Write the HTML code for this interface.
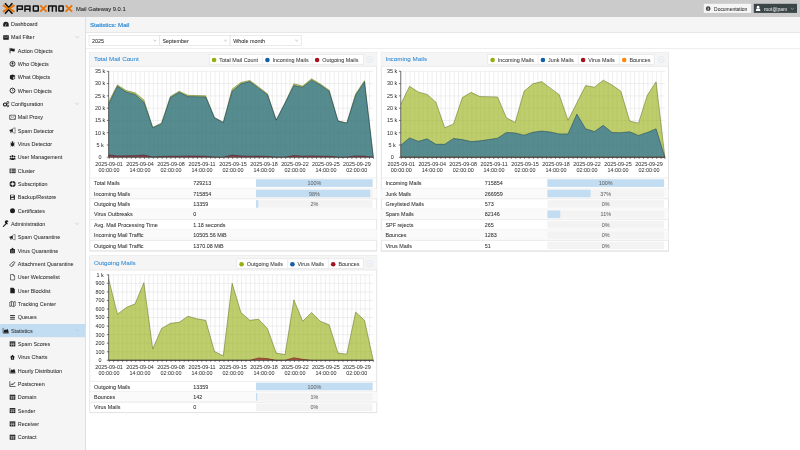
<!DOCTYPE html>
<html><head><meta charset="utf-8"><style>
html,body{margin:0;padding:0;width:800px;height:450px;overflow:hidden;background:#fff}
#root{position:absolute;left:0;top:0;width:800px;height:450px;will-change:transform;overflow:hidden;background:#fff}
svg{position:absolute;left:0;top:0;font-family:"Liberation Sans", sans-serif}
</style></head><body><div id="root">
<svg width="800" height="450" viewBox="0 0 800 450">
<rect x="0" y="0" width="800" height="17" fill="#cbcbcb"/>
<g fill="none" stroke-linecap="butt" stroke-linejoin="miter">
 <path d="M5,3.2 L8.7,7.6 L12.4,3.2" stroke="#111" stroke-width="1.6"/>
 <path d="M5,13.8 L8.7,9.4 L12.4,13.8" stroke="#111" stroke-width="1.6"/>
 <path d="M3,5.1 L7.9,8.5 L3,11.9" stroke="#e8750b" stroke-width="1.9"/>
 <path d="M14.5,5.1 L9.5,8.5 L14.5,11.9" stroke="#e8750b" stroke-width="1.9"/>
</g>
<g fill="none" stroke="#111" stroke-width="1.5" stroke-linejoin="round">
 <path d="M17.25,11.75 V5.95 H22.35 V9.3 H17.25"/>
 <path d="M24.95,11.75 V5.95 H29.95 V9.3 H24.95 M29.95,9.3 V11.75"/>
 <rect x="33.35" y="5.95" width="4.9" height="5.05" rx="0.3"/>
 <path d="M48.65,11.75 V5.95 H56.15 V11.75 M52.4,5.95 V11.75"/>
 <rect x="58.95" y="5.95" width="4.2" height="5.05" rx="0.3"/>
</g>
<g fill="none" stroke="#e8750b" stroke-width="1.85">
 <path d="M40.2,5.3 L46.6,11.7 M46.6,5.3 L40.2,11.7"/>
 <path d="M65.6,5.3 L72.2,11.7 M72.2,5.3 L65.6,11.7"/>
</g>
<text x="76" y="10.6" font-size="5.8" fill="#1a1a1a" stroke="#1a1a1a" stroke-width="0.05">Mail Gateway 9.0.1</text>
<rect x="703.8" y="3.8" width="47.2" height="9.1" fill="#f5f5f5"/>
<circle cx="708.2" cy="8.7" r="2.35" fill="#444"/><path d="M708.2,8V10.2" stroke="#f5f5f5" stroke-width="0.75"/><circle cx="708.2" cy="7.1" r="0.42" fill="#f5f5f5"/>
<text x="714.1" y="10.8" font-size="4.95" fill="#333" stroke="#333" stroke-width="0.05">Documentation</text>
<rect x="753.8" y="3.8" width="43.2" height="9.1" fill="#3a4548"/>
<circle cx="758.1" cy="7.2" r="1.35" fill="#fff"/><path d="M755.9,11 v-1.1 q0.3,-1.3 1.4,-1.3 h1.6 q1.1,0 1.4,1.3 v1.1 Z" fill="#fff"/><path d="M790.7,8 l1.6,1.4 l1.6,-1.4" stroke="#cfd4d5" stroke-width="0.5" fill="none"/>
<text x="763.9" y="10.6" font-size="4.95" fill="#f0f0f0">root@pam</text>
<rect x="0" y="17" width="85.2" height="433" fill="#f5f5f5"/>
<path d="M85.5,17V450" stroke="#d6d6d6" stroke-width="0.8"/>
<rect x="0" y="324" width="85" height="13.2" fill="#c2ddf2"/>
<g transform="translate(2.8,20.9)"><path d="M0.4,5.5 V3.6 A2.75,2.75 0 0 1 5.9,3.6 V5.5 Z" fill="#1e1e1e"/><path d="M2.4,5.2 L3.6,2.6" stroke="#f5f5f5" stroke-width="0.55"/></g>
<text x="11" y="26.1" font-size="5.42" fill="#303030" stroke="#303030" stroke-width="0.05">Dashboard</text>
<g transform="translate(2.8,34.23)"><rect x="0.4" y="1.0" width="5.6" height="4.4" rx="0.3" fill="#1e1e1e"/><path d="M1.1,2.5 Q3.2,3.9 5.3,2.5" stroke="#f5f5f5" stroke-width="0.5" fill="none"/></g>
<text x="11" y="39.43" font-size="5.42" fill="#303030" stroke="#303030" stroke-width="0.05">Mail Filter</text>
<path d="M75.4,36.33 l1.7,1.5 l1.7,-1.5" stroke="#c6c6c6" stroke-width="0.75" fill="none"/>
<g transform="translate(9.5,47.57)"><path d="M0.5,0.3 V5.8" stroke="#1e1e1e" stroke-width="0.8"/><path d="M0.8,1 Q2,0.4 3,1 T5.2,1 V3.7 Q4,4.2 3,3.7 T0.8,3.7 Z" fill="#1e1e1e"/></g>
<text x="17.8" y="52.77" font-size="5.42" fill="#303030" stroke="#303030" stroke-width="0.05">Action Objects</text>
<g transform="translate(9.5,60.9)"><circle cx="3" cy="3" r="2.55" fill="none" stroke="#1e1e1e" stroke-width="0.8"/><circle cx="3" cy="2.3" r="0.95" fill="#1e1e1e"/><path d="M1.4,4.7 Q3,2.6 4.6,4.7 Z" fill="#1e1e1e"/></g>
<text x="17.8" y="66.1" font-size="5.42" fill="#303030" stroke="#303030" stroke-width="0.05">Who Objects</text>
<g transform="translate(9.5,74.23)"><path d="M3,0.2 L5.6,1.3 V4.6 L3,5.8 L0.4,4.6 V1.3 Z" fill="#1e1e1e"/><path d="M3.4,2.7 L5.1,1.9 V4.2 L3.4,5 Z" fill="#bbb"/></g>
<text x="17.8" y="79.43" font-size="5.42" fill="#303030" stroke="#303030" stroke-width="0.05">What Objects</text>
<g transform="translate(9.5,87.57)"><circle cx="3" cy="3" r="2.45" fill="none" stroke="#1e1e1e" stroke-width="0.9"/><path d="M3,1.6 V3.2 H4" stroke="#1e1e1e" stroke-width="0.6" fill="none"/></g>
<text x="17.8" y="92.77" font-size="5.42" fill="#303030" stroke="#303030" stroke-width="0.05">When Objects</text>
<g transform="translate(2.8,100.9)"><circle cx="2.2" cy="3.6" r="1.55" fill="none" stroke="#1e1e1e" stroke-width="1.1"/><circle cx="5" cy="1.6" r="1" fill="none" stroke="#1e1e1e" stroke-width="0.8"/><circle cx="5" cy="5" r="0.95" fill="none" stroke="#1e1e1e" stroke-width="0.8"/></g>
<text x="11" y="106.1" font-size="5.42" fill="#303030" stroke="#303030" stroke-width="0.05">Configuration</text>
<path d="M75.4,103 l1.7,1.5 l1.7,-1.5" stroke="#c6c6c6" stroke-width="0.75" fill="none"/>
<g transform="translate(9.5,114.23)"><rect x="0.1" y="1.0" width="5.9" height="4.2" rx="0.2" fill="none" stroke="#1e1e1e" stroke-width="0.6"/><path d="M0.3,1.3 L3.05,3.4 L5.8,1.3 M0.4,5 L2.1,3.2 M5.7,5 L4,3.2" stroke="#1e1e1e" stroke-width="0.35" fill="none"/></g>
<text x="17.8" y="119.43" font-size="5.42" fill="#303030" stroke="#303030" stroke-width="0.05">Mail Proxy</text>
<g transform="translate(9.5,127.57)"><path d="M0.1,2.2 H1.3 L3.3,0.9 V5 L1.3,3.7 H0.1 Z" fill="#1e1e1e"/><path d="M1,3.7 L1.6,5.6" stroke="#1e1e1e" stroke-width="0.8"/><path d="M3.3,0.9 L5.6,0.2 V5.7 L3.3,5" stroke="#1e1e1e" stroke-width="0.45" fill="none"/></g>
<text x="17.8" y="132.77" font-size="5.42" fill="#303030" stroke="#303030" stroke-width="0.05">Spam Detector</text>
<g transform="translate(9.5,140.9)"><ellipse cx="3" cy="3.6" rx="1.6" ry="2.1" fill="#1e1e1e"/><circle cx="3" cy="1.2" r="0.9" fill="#1e1e1e"/><path d="M0.5,3 H5.5 M0.8,5.3 L1.8,4.6 M5.2,5.3 L4.2,4.6 M0.9,1.6 L1.8,2.2 M5.1,1.6 L4.2,2.2" stroke="#1e1e1e" stroke-width="0.5"/></g>
<text x="17.8" y="146.1" font-size="5.42" fill="#303030" stroke="#303030" stroke-width="0.05">Virus Detector</text>
<g transform="translate(9.5,154.23)"><circle cx="3.05" cy="1.9" r="1.05" fill="#1e1e1e"/><circle cx="1.0" cy="2.3" r="0.85" fill="#1e1e1e"/><circle cx="5.1" cy="2.3" r="0.85" fill="#1e1e1e"/><path d="M1.5,5.8 Q1.5,3.3 3.05,3.2 Q4.6,3.3 4.6,5.8 Z" fill="#1e1e1e"/><path d="M0,5.2 Q0,3.4 1.1,3.4 Q1.7,3.4 1.9,3.8 L1.5,5.2 Z M6.1,5.2 Q6.1,3.4 5,3.4 Q4.4,3.4 4.2,3.8 L4.6,5.2 Z" fill="#1e1e1e"/></g>
<text x="17.8" y="159.43" font-size="5.42" fill="#303030" stroke="#303030" stroke-width="0.05">User Management</text>
<g transform="translate(9.5,167.57)"><rect x="0" y="1.0" width="6.2" height="4.6" fill="#3a3a3a"/><path d="M0,2.55 H6.2 M0,4.1 H6.2 M2,1 V5.6" stroke="#f5f5f5" stroke-width="0.45"/></g>
<text x="17.8" y="172.77" font-size="5.42" fill="#303030" stroke="#303030" stroke-width="0.05">Cluster</text>
<g transform="translate(9.5,180.9)"><circle cx="3.1" cy="3.1" r="2.2" fill="none" stroke="#1e1e1e" stroke-width="1.7"/><path d="M3.1,0.1 V6.1 M0.1,3.1 H6.1" stroke="#f5f5f5" stroke-width="0.55"/></g>
<text x="17.8" y="186.1" font-size="5.42" fill="#303030" stroke="#303030" stroke-width="0.05">Subscription</text>
<g transform="translate(9.5,194.23)"><path d="M0.6,0.5 H4.6 L5.4,1.3 V5.6 H0.6 Z" fill="#1e1e1e"/><rect x="1.5" y="0.9" width="2.6" height="1.5" fill="#f5f5f5"/><rect x="1.7" y="3.6" width="2.6" height="1.6" fill="#f5f5f5"/></g>
<text x="17.8" y="199.43" font-size="5.42" fill="#303030" stroke="#303030" stroke-width="0.05">Backup/Restore</text>
<g transform="translate(9.5,207.57)"><circle cx="3" cy="3.1" r="2.5" fill="#1e1e1e"/></g>
<text x="17.8" y="212.77" font-size="5.42" fill="#303030" stroke="#303030" stroke-width="0.05">Certificates</text>
<g transform="translate(2.8,220.9)"><path d="M0.6,5.5 L3.6,2.5" stroke="#1e1e1e" stroke-width="1.2" stroke-linecap="round"/><path d="M2.8,2.6 A1.8,1.8 0 1 1 5.6,1.2 L4.6,1.2 L4.2,2 L5.4,2.8 A1.8,1.8 0 0 1 2.8,2.6 Z" fill="#1e1e1e"/></g>
<text x="11" y="226.1" font-size="5.42" fill="#303030" stroke="#303030" stroke-width="0.05">Administration</text>
<path d="M75.4,223 l1.7,1.5 l1.7,-1.5" stroke="#c6c6c6" stroke-width="0.75" fill="none"/>
<g transform="translate(9.5,234.23)"><path d="M0.1,2.2 H1.3 L3.3,0.9 V5 L1.3,3.7 H0.1 Z" fill="#1e1e1e"/><path d="M1,3.7 L1.6,5.6" stroke="#1e1e1e" stroke-width="0.8"/><path d="M3.3,0.9 L5.6,0.2 V5.7 L3.3,5" stroke="#1e1e1e" stroke-width="0.45" fill="none"/></g>
<text x="17.8" y="239.43" font-size="5.42" fill="#303030" stroke="#303030" stroke-width="0.05">Spam Quarantine</text>
<g transform="translate(9.5,247.57)"><rect x="2.2" y="0.3" width="1.6" height="1.3" fill="#1e1e1e"/><rect x="0.6" y="1.5" width="4.8" height="4.2" rx="0.5" fill="#1e1e1e"/><path d="M2.3,2.4 V5.2 M3.7,2.4 V5.2" stroke="#f5f5f5" stroke-width="0.4"/></g>
<text x="17.8" y="252.77" font-size="5.42" fill="#303030" stroke="#303030" stroke-width="0.05">Virus Quarantine</text>
<g transform="translate(9.5,260.9)"><path d="M4.8,3.6 L2.6,5.4 Q1.2,6 0.6,4.6 Q0.3,3.6 1.2,2.9 L3.6,1 Q4.6,0.4 5.2,1.2 Q5.7,2 4.9,2.6 L2.6,4.4" stroke="#1e1e1e" stroke-width="0.65" fill="none"/></g>
<text x="17.8" y="266.1" font-size="5.42" fill="#303030" stroke="#303030" stroke-width="0.05">Attachment Quarantine</text>
<g transform="translate(9.5,274.23)"><path d="M1,0.3 H3.8 L5.1,1.6 V5.7 H1 Z" fill="none" stroke="#1e1e1e" stroke-width="0.6"/><path d="M3.8,0.3 V1.6 H5.1" stroke="#1e1e1e" stroke-width="0.5" fill="none"/></g>
<text x="17.8" y="279.43" font-size="5.42" fill="#303030" stroke="#303030" stroke-width="0.05">User Welcomelist</text>
<g transform="translate(9.5,287.57)"><path d="M0.8,0.2 H3.9 L5.3,1.6 V5.8 H0.8 Z" fill="#1e1e1e"/></g>
<text x="17.8" y="292.77" font-size="5.42" fill="#303030" stroke="#303030" stroke-width="0.05">User Blocklist</text>
<g transform="translate(9.5,300.9)"><path d="M0.3,1.2 L2,0.5 L4,1.2 L5.7,0.5 V5 L4,5.7 L2,5 L0.3,5.7 Z M2,0.5 V5 M4,1.2 V5.7" fill="none" stroke="#1e1e1e" stroke-width="0.6"/></g>
<text x="17.8" y="306.1" font-size="5.42" fill="#303030" stroke="#303030" stroke-width="0.05">Tracking Center</text>
<g transform="translate(9.5,314.23)"><path d="M0.6,1.3 H5.4 M0.6,3.1 H5.4 M0.6,4.9 H5.4" stroke="#1e1e1e" stroke-width="0.9"/></g>
<text x="17.8" y="319.43" font-size="5.42" fill="#303030" stroke="#303030" stroke-width="0.05">Queues</text>
<g transform="translate(2.8,327.57)"><path d="M0.3,0.3 V5.6 H6" stroke="#1e1e1e" stroke-width="0.6" fill="none"/><path d="M1,5.3 V3.2 L2.3,1.8 L3.3,2.8 L4.6,1.2 L5.7,3.4 V5.3 Z" fill="#1e1e1e"/></g>
<text x="11" y="332.77" font-size="5.42" fill="#303030" stroke="#303030" stroke-width="0.05">Statistics</text>
<path d="M75.4,329.67 l1.7,1.5 l1.7,-1.5" stroke="#c6c6c6" stroke-width="0.75" fill="none"/>
<g transform="translate(9.5,340.9)"><rect x="0.2" y="0.5" width="5.6" height="5" fill="#1e1e1e"/><path d="M0.7,2.1 H5.3 M0.7,3.7 H5.3 M2.1,2.1 V5.1 M3.9,2.1 V5.1" stroke="#f5f5f5" stroke-width="0.45"/></g>
<text x="17.8" y="346.1" font-size="5.42" fill="#303030" stroke="#303030" stroke-width="0.05">Spam Scores</text>
<g transform="translate(9.5,354.23)"><path d="M3,0.5 L5.6,3 H4.6 V5.6 H1.4 V3 H0.4 Z" fill="#1e1e1e"/><path d="M3,2.6 V5" stroke="#f5f5f5" stroke-width="0.5"/></g>
<text x="17.8" y="359.43" font-size="5.42" fill="#303030" stroke="#303030" stroke-width="0.05">Virus Charts</text>
<g transform="translate(9.5,367.57)"><path d="M0.3,0.3 V5.6 H6" stroke="#1e1e1e" stroke-width="0.6" fill="none"/><path d="M1,5.3 V3.2 L2.3,1.8 L3.3,2.8 L4.6,1.2 L5.7,3.4 V5.3 Z" fill="#1e1e1e"/></g>
<text x="17.8" y="372.77" font-size="5.42" fill="#303030" stroke="#303030" stroke-width="0.05">Hourly Distribution</text>
<g transform="translate(9.5,380.9)"><path d="M0.3,0.3 V5.6 H6" stroke="#1e1e1e" stroke-width="0.65" fill="none"/><path d="M1,4.5 L2.4,2.9 L3.5,3.7 L5.5,1.3" stroke="#1e1e1e" stroke-width="0.85" fill="none"/></g>
<text x="17.8" y="386.1" font-size="5.42" fill="#303030" stroke="#303030" stroke-width="0.05">Postscreen</text>
<g transform="translate(9.5,394.23)"><rect x="0.2" y="0.5" width="5.6" height="5" fill="#1e1e1e"/><path d="M0.7,2.1 H5.3 M0.7,3.7 H5.3 M2.1,2.1 V5.1 M3.9,2.1 V5.1" stroke="#f5f5f5" stroke-width="0.45"/></g>
<text x="17.8" y="399.43" font-size="5.42" fill="#303030" stroke="#303030" stroke-width="0.05">Domain</text>
<g transform="translate(9.5,407.57)"><rect x="0.2" y="0.5" width="5.6" height="5" fill="#1e1e1e"/><path d="M0.7,2.1 H5.3 M0.7,3.7 H5.3 M2.1,2.1 V5.1 M3.9,2.1 V5.1" stroke="#f5f5f5" stroke-width="0.45"/></g>
<text x="17.8" y="412.77" font-size="5.42" fill="#303030" stroke="#303030" stroke-width="0.05">Sender</text>
<g transform="translate(9.5,420.9)"><rect x="0.2" y="0.5" width="5.6" height="5" fill="#1e1e1e"/><path d="M0.7,2.1 H5.3 M0.7,3.7 H5.3 M2.1,2.1 V5.1 M3.9,2.1 V5.1" stroke="#f5f5f5" stroke-width="0.45"/></g>
<text x="17.8" y="426.1" font-size="5.42" fill="#303030" stroke="#303030" stroke-width="0.05">Receiver</text>
<g transform="translate(9.5,434.23)"><rect x="0.2" y="0.5" width="5.6" height="5" fill="#1e1e1e"/><path d="M0.7,2.1 H5.3 M0.7,3.7 H5.3 M2.1,2.1 V5.1 M3.9,2.1 V5.1" stroke="#f5f5f5" stroke-width="0.45"/></g>
<text x="17.8" y="439.43" font-size="5.42" fill="#303030" stroke="#303030" stroke-width="0.05">Contact</text>
<rect x="85.9" y="17" width="714.1" height="15.3" fill="#f5f5f5"/>
<path d="M85.9,32.5H800" stroke="#dedede" stroke-width="0.7"/>
<path d="M85.9,48.5H800" stroke="#e6e6e6" stroke-width="0.7"/>
<text x="89.9" y="26.9" font-size="6.18" fill="#3590d8" stroke="#3590d8" stroke-width="0.22">Statistics: Mail</text>
<rect x="89" y="35.6" width="70.4" height="10" fill="#ffffff" stroke="#dcdcdc" stroke-width="0.6"/>
<text x="92.1" y="42.7" font-size="5.42" fill="#303030" stroke="#303030" stroke-width="0.05">2025</text>
<path d="M153.5,39.9 l1.3,1.2 l1.3,-1.2" stroke="#8a8a8a" stroke-width="0.5" fill="none"/>
<rect x="159.3" y="35.6" width="70.8" height="10" fill="#ffffff" stroke="#dcdcdc" stroke-width="0.6"/>
<text x="162.4" y="42.7" font-size="5.42" fill="#303030" stroke="#303030" stroke-width="0.05">September</text>
<path d="M224.2,39.9 l1.3,1.2 l1.3,-1.2" stroke="#8a8a8a" stroke-width="0.5" fill="none"/>
<rect x="230.1" y="35.6" width="71.1" height="10" fill="#ffffff" stroke="#dcdcdc" stroke-width="0.6"/>
<text x="233.2" y="42.7" font-size="5.42" fill="#303030" stroke="#303030" stroke-width="0.05">Whole month</text>
<path d="M295.3,39.9 l1.3,1.2 l1.3,-1.2" stroke="#8a8a8a" stroke-width="0.5" fill="none"/>
<rect x="89.8" y="52.3" width="287" height="198.7" fill="#ffffff" stroke="#d9d9d9" stroke-width="0.7"/>
<rect x="89.8" y="52.3" width="287" height="14.1" fill="#f5f5f5"/>
<path d="M89.8,66.4H376.8" stroke="#e2e2e2" stroke-width="0.6"/>
<text x="94" y="61.15" font-size="6.25" fill="#2f8ad6" stroke="#2f8ad6" stroke-width="0.06">Total Mail Count</text>
<rect x="209.3" y="54.6" width="154.1" height="9.6" fill="#ffffff" stroke="#e2e2e2" stroke-width="0.6"/>
<circle cx="214.1" cy="60" r="2.3" fill="#94ae0a"/>
<text x="219.3" y="61.65" font-size="5.42" fill="#3c3c3c" stroke="#3c3c3c" stroke-width="0.05">Total Mail Count</text>
<path d="M262.6,54.6V64.2" stroke="#e2e2e2" stroke-width="0.6"/>
<circle cx="267.4" cy="60" r="2.3" fill="#115fa6"/>
<text x="272.6" y="61.65" font-size="5.42" fill="#3c3c3c" stroke="#3c3c3c" stroke-width="0.05">Incoming Mails</text>
<path d="M312.3,54.6V64.2" stroke="#e2e2e2" stroke-width="0.6"/>
<circle cx="317.1" cy="60" r="2.3" fill="#a61120"/>
<text x="322.3" y="61.65" font-size="5.42" fill="#3c3c3c" stroke="#3c3c3c" stroke-width="0.05">Outgoing Mails</text>
<circle cx="369.5" cy="59.6" r="3.1" fill="none" stroke="#cfe0f0" stroke-width="0.5"/><path d="M367.9,59.6H371.1" stroke="#cfe0f0" stroke-width="0.5"/>
<path d="M109.2,71.3V157.3 M113.61,71.3V157.3 M118.02,71.3V157.3 M122.43,71.3V157.3 M126.85,71.3V157.3 M131.26,71.3V157.3 M135.67,71.3V157.3 M140.08,71.3V157.3 M144.49,71.3V157.3 M148.91,71.3V157.3 M153.32,71.3V157.3 M157.73,71.3V157.3 M162.14,71.3V157.3 M166.55,71.3V157.3 M170.96,71.3V157.3 M175.38,71.3V157.3 M179.79,71.3V157.3 M184.2,71.3V157.3 M188.61,71.3V157.3 M193.02,71.3V157.3 M197.43,71.3V157.3 M201.84,71.3V157.3 M206.26,71.3V157.3 M210.67,71.3V157.3 M215.08,71.3V157.3 M219.49,71.3V157.3 M223.9,71.3V157.3 M228.31,71.3V157.3 M232.73,71.3V157.3 M237.14,71.3V157.3 M241.55,71.3V157.3 M245.96,71.3V157.3 M250.37,71.3V157.3 M254.79,71.3V157.3 M259.2,71.3V157.3 M263.61,71.3V157.3 M268.02,71.3V157.3 M272.43,71.3V157.3 M276.84,71.3V157.3 M281.25,71.3V157.3 M285.67,71.3V157.3 M290.08,71.3V157.3 M294.49,71.3V157.3 M298.9,71.3V157.3 M303.31,71.3V157.3 M307.73,71.3V157.3 M312.14,71.3V157.3 M316.55,71.3V157.3 M320.96,71.3V157.3 M325.37,71.3V157.3 M329.78,71.3V157.3 M334.2,71.3V157.3 M338.61,71.3V157.3 M343.02,71.3V157.3 M347.43,71.3V157.3 M351.84,71.3V157.3 M356.25,71.3V157.3 M360.67,71.3V157.3 M365.08,71.3V157.3 M369.49,71.3V157.3 M108.6,145.01H373.3 M108.6,132.73H373.3 M108.6,120.44H373.3 M108.6,108.16H373.3 M108.6,95.87H373.3 M108.6,83.59H373.3 M108.6,71.3H373.3" stroke="#dedede" stroke-width="0.5" fill="none"/>
<path d="M108.6,157.3 L108.6,102.12 L117.42,84.96 L126.25,90.55 L135.07,92.78 L143.89,99.91 L152.72,127.42 L161.54,122.97 L170.36,96.53 L179.19,91.27 L188.01,95.34 L196.83,95.54 L205.66,95.83 L214.48,117.49 L223.3,122.4 L232.13,89.11 L240.95,82.46 L249.77,80.47 L258.6,86.95 L267.42,93.73 L276.24,119.99 L285.07,102.83 L293.89,83.81 L302.71,86.03 L311.54,78.77 L320.36,83.94 L329.18,90.18 L338.01,120.85 L346.83,122.97 L355.65,93.87 L364.48,80.72 L373.3,157.3 L373.3,157.3 Z" fill="#94ae0a" fill-opacity="0.6"/>
<path d="M108.6,102.12 L117.42,84.96 L126.25,90.55 L135.07,92.78 L143.89,99.91 L152.72,127.42 L161.54,122.97 L170.36,96.53 L179.19,91.27 L188.01,95.34 L196.83,95.54 L205.66,95.83 L214.48,117.49 L223.3,122.4 L232.13,89.11 L240.95,82.46 L249.77,80.47 L258.6,86.95 L267.42,93.73 L276.24,119.99 L285.07,102.83 L293.89,83.81 L302.71,86.03 L311.54,78.77 L320.36,83.94 L329.18,90.18 L338.01,120.85 L346.83,122.97 L355.65,93.87 L364.48,80.72 L373.3,157.3" fill="none" stroke="#4a5705" stroke-width="0.55" stroke-opacity="0.8" stroke-linejoin="round"/>
<path d="M108.6,157.3 L108.6,104.47 L117.42,86.29 L126.25,92.06 L135.07,94.4 L143.89,102.14 L152.72,127.74 L161.54,123.88 L170.36,97.59 L179.19,92.36 L188.01,96.61 L196.83,96.73 L205.66,96.98 L214.48,117.74 L223.3,122.53 L232.13,91.33 L240.95,83.83 L249.77,81.62 L258.6,88.13 L267.42,94.64 L276.24,120.2 L285.07,103 L293.89,85.55 L302.71,87.15 L311.54,80.15 L320.36,85.06 L329.18,91.2 L338.01,121.06 L346.83,123.15 L355.65,95.26 L364.48,81.87 L373.3,157.3 L373.3,157.3 Z" fill="#115fa6" fill-opacity="0.6"/>
<path d="M108.6,104.47 L117.42,86.29 L126.25,92.06 L135.07,94.4 L143.89,102.14 L152.72,127.74 L161.54,123.88 L170.36,97.59 L179.19,92.36 L188.01,96.61 L196.83,96.73 L205.66,96.98 L214.48,117.74 L223.3,122.53 L232.13,91.33 L240.95,83.83 L249.77,81.62 L258.6,88.13 L267.42,94.64 L276.24,120.2 L285.07,103 L293.89,85.55 L302.71,87.15 L311.54,80.15 L320.36,85.06 L329.18,91.2 L338.01,121.06 L346.83,123.15 L355.65,95.26 L364.48,81.87 L373.3,157.3" fill="none" stroke="#082f53" stroke-width="0.55" stroke-opacity="0.8" stroke-linejoin="round"/>
<path d="M108.6,157.3 L108.6,154.95 L117.42,155.97 L126.25,155.78 L135.07,155.68 L143.89,155.07 L152.72,156.98 L161.54,156.39 L170.36,156.24 L179.19,156.21 L188.01,156.03 L196.83,156.11 L205.66,156.15 L214.48,157.05 L223.3,157.17 L232.13,155.09 L240.95,155.93 L249.77,156.15 L258.6,156.12 L267.42,156.39 L276.24,157.09 L285.07,157.14 L293.89,155.56 L302.71,156.18 L311.54,155.93 L320.36,156.18 L329.18,156.28 L338.01,157.09 L346.83,157.12 L355.65,155.91 L364.48,156.15 L373.3,157.3 L373.3,157.3 Z" fill="#a61120" fill-opacity="0.6"/>
<path d="M108.6,154.95 L117.42,155.97 L126.25,155.78 L135.07,155.68 L143.89,155.07 L152.72,156.98 L161.54,156.39 L170.36,156.24 L179.19,156.21 L188.01,156.03 L196.83,156.11 L205.66,156.15 L214.48,157.05 L223.3,157.17 L232.13,155.09 L240.95,155.93 L249.77,156.15 L258.6,156.12 L267.42,156.39 L276.24,157.09 L285.07,157.14 L293.89,155.56 L302.71,156.18 L311.54,155.93 L320.36,156.18 L329.18,156.28 L338.01,157.09 L346.83,157.12 L355.65,155.91 L364.48,156.15 L373.3,157.3" fill="none" stroke="#530810" stroke-width="0.55" stroke-opacity="0.8" stroke-linejoin="round"/>
<path d="M108.6,71.1V157.3H373.3 M106.8,157.3H108.6 M106.8,145.01H108.6 M106.8,132.73H108.6 M106.8,120.44H108.6 M106.8,108.16H108.6 M106.8,95.87H108.6 M106.8,83.59H108.6 M106.8,71.3H108.6 M109.2,157.3v1.6 M113.61,157.3v1.6 M118.02,157.3v1.6 M122.43,157.3v1.6 M126.85,157.3v1.6 M131.26,157.3v1.6 M135.67,157.3v1.6 M140.08,157.3v1.6 M144.49,157.3v1.6 M148.91,157.3v1.6 M153.32,157.3v1.6 M157.73,157.3v1.6 M162.14,157.3v1.6 M166.55,157.3v1.6 M170.96,157.3v1.6 M175.38,157.3v1.6 M179.79,157.3v1.6 M184.2,157.3v1.6 M188.61,157.3v1.6 M193.02,157.3v1.6 M197.43,157.3v1.6 M201.84,157.3v1.6 M206.26,157.3v1.6 M210.67,157.3v1.6 M215.08,157.3v1.6 M219.49,157.3v1.6 M223.9,157.3v1.6 M228.31,157.3v1.6 M232.73,157.3v1.6 M237.14,157.3v1.6 M241.55,157.3v1.6 M245.96,157.3v1.6 M250.37,157.3v1.6 M254.79,157.3v1.6 M259.2,157.3v1.6 M263.61,157.3v1.6 M268.02,157.3v1.6 M272.43,157.3v1.6 M276.84,157.3v1.6 M281.25,157.3v1.6 M285.67,157.3v1.6 M290.08,157.3v1.6 M294.49,157.3v1.6 M298.9,157.3v1.6 M303.31,157.3v1.6 M307.73,157.3v1.6 M312.14,157.3v1.6 M316.55,157.3v1.6 M320.96,157.3v1.6 M325.37,157.3v1.6 M329.78,157.3v1.6 M334.2,157.3v1.6 M338.61,157.3v1.6 M343.02,157.3v1.6 M347.43,157.3v1.6 M351.84,157.3v1.6 M356.25,157.3v1.6 M360.67,157.3v1.6 M365.08,157.3v1.6 M369.49,157.3v1.6 M373.3,157.3v1.6" stroke="#333" stroke-width="0.65" fill="none"/>
<text x="100.1" y="159.2" font-size="5.4" fill="#333" stroke="#333" stroke-width="0.03" text-anchor="middle">0</text>
<text x="100.1" y="146.91" font-size="5.4" fill="#333" stroke="#333" stroke-width="0.03" text-anchor="middle">5 k</text>
<text x="100.1" y="134.63" font-size="5.4" fill="#333" stroke="#333" stroke-width="0.03" text-anchor="middle">10 k</text>
<text x="100.1" y="122.34" font-size="5.4" fill="#333" stroke="#333" stroke-width="0.03" text-anchor="middle">15 k</text>
<text x="100.1" y="110.06" font-size="5.4" fill="#333" stroke="#333" stroke-width="0.03" text-anchor="middle">20 k</text>
<text x="100.1" y="97.77" font-size="5.4" fill="#333" stroke="#333" stroke-width="0.03" text-anchor="middle">25 k</text>
<text x="100.1" y="85.49" font-size="5.4" fill="#333" stroke="#333" stroke-width="0.03" text-anchor="middle">30 k</text>
<text x="100.1" y="73.2" font-size="5.4" fill="#333" stroke="#333" stroke-width="0.03" text-anchor="middle">35 k</text>
<text x="109.1" y="165.6" font-size="5.4" fill="#333" stroke="#333" stroke-width="0.03" text-anchor="middle">2025-09-01</text>
<text x="109.1" y="171.8" font-size="5.4" fill="#333" stroke="#333" stroke-width="0.03" text-anchor="middle">00:00:00</text>
<text x="140.07" y="165.6" font-size="5.4" fill="#333" stroke="#333" stroke-width="0.03" text-anchor="middle">2025-09-04</text>
<text x="140.07" y="171.8" font-size="5.4" fill="#333" stroke="#333" stroke-width="0.03" text-anchor="middle">14:00:00</text>
<text x="171.04" y="165.6" font-size="5.4" fill="#333" stroke="#333" stroke-width="0.03" text-anchor="middle">2025-09-08</text>
<text x="171.04" y="171.8" font-size="5.4" fill="#333" stroke="#333" stroke-width="0.03" text-anchor="middle">02:00:00</text>
<text x="202.01" y="165.6" font-size="5.4" fill="#333" stroke="#333" stroke-width="0.03" text-anchor="middle">2025-09-11</text>
<text x="202.01" y="171.8" font-size="5.4" fill="#333" stroke="#333" stroke-width="0.03" text-anchor="middle">14:00:00</text>
<text x="232.98" y="165.6" font-size="5.4" fill="#333" stroke="#333" stroke-width="0.03" text-anchor="middle">2025-09-15</text>
<text x="232.98" y="171.8" font-size="5.4" fill="#333" stroke="#333" stroke-width="0.03" text-anchor="middle">02:00:00</text>
<text x="263.95" y="165.6" font-size="5.4" fill="#333" stroke="#333" stroke-width="0.03" text-anchor="middle">2025-09-18</text>
<text x="263.95" y="171.8" font-size="5.4" fill="#333" stroke="#333" stroke-width="0.03" text-anchor="middle">14:00:00</text>
<text x="294.92" y="165.6" font-size="5.4" fill="#333" stroke="#333" stroke-width="0.03" text-anchor="middle">2025-09-22</text>
<text x="294.92" y="171.8" font-size="5.4" fill="#333" stroke="#333" stroke-width="0.03" text-anchor="middle">02:00:00</text>
<text x="325.89" y="165.6" font-size="5.4" fill="#333" stroke="#333" stroke-width="0.03" text-anchor="middle">2025-09-25</text>
<text x="325.89" y="171.8" font-size="5.4" fill="#333" stroke="#333" stroke-width="0.03" text-anchor="middle">14:00:00</text>
<text x="356.86" y="165.6" font-size="5.4" fill="#333" stroke="#333" stroke-width="0.03" text-anchor="middle">2025-09-29</text>
<text x="356.86" y="171.8" font-size="5.4" fill="#333" stroke="#333" stroke-width="0.03" text-anchor="middle">02:00:00</text>
<path d="M89.8,188.4H376.8" stroke="#e4e4e4" stroke-width="0.7"/>
<text x="94.1" y="185.15" font-size="5.42" fill="#303030" stroke="#303030" stroke-width="0.05">Total Mails</text>
<text x="193.3" y="185.15" font-size="5.42" fill="#303030" stroke="#303030" stroke-width="0.05">729213</text>
<rect x="256" y="179.3" width="116.6" height="7.6" fill="#f3f3f3"/>
<rect x="256" y="179.3" width="116.6" height="7.6" fill="#c2ddf2"/>
<text x="314.3" y="185.1" font-size="5.42" fill="#6a6a6a" stroke="#6a6a6a" stroke-width="0.05" text-anchor="middle">100%</text>
<rect x="89.8" y="188.4" width="287" height="10.4" fill="#fafafa"/>
<path d="M89.8,198.8H376.8" stroke="#e4e4e4" stroke-width="0.7"/>
<text x="94.1" y="195.55" font-size="5.42" fill="#303030" stroke="#303030" stroke-width="0.05">Incoming Mails</text>
<text x="193.3" y="195.55" font-size="5.42" fill="#303030" stroke="#303030" stroke-width="0.05">715854</text>
<rect x="256" y="189.7" width="116.6" height="7.6" fill="#f3f3f3"/>
<rect x="256" y="189.7" width="114.27" height="7.6" fill="#c2ddf2"/>
<text x="314.3" y="195.5" font-size="5.42" fill="#6a6a6a" stroke="#6a6a6a" stroke-width="0.05" text-anchor="middle">98%</text>
<path d="M89.8,209.2H376.8" stroke="#e4e4e4" stroke-width="0.7"/>
<text x="94.1" y="205.95" font-size="5.42" fill="#303030" stroke="#303030" stroke-width="0.05">Outgoing Mails</text>
<text x="193.3" y="205.95" font-size="5.42" fill="#303030" stroke="#303030" stroke-width="0.05">13359</text>
<rect x="256" y="200.1" width="116.6" height="7.6" fill="#f3f3f3"/>
<rect x="256" y="200.1" width="2.33" height="7.6" fill="#c2ddf2"/>
<text x="314.3" y="205.9" font-size="5.42" fill="#6a6a6a" stroke="#6a6a6a" stroke-width="0.05" text-anchor="middle">2%</text>
<rect x="89.8" y="209.2" width="287" height="10.4" fill="#fafafa"/>
<path d="M89.8,219.6H376.8" stroke="#e4e4e4" stroke-width="0.7"/>
<text x="94.1" y="216.35" font-size="5.42" fill="#303030" stroke="#303030" stroke-width="0.05">Virus Outbreaks</text>
<text x="193.3" y="216.35" font-size="5.42" fill="#303030" stroke="#303030" stroke-width="0.05">0</text>
<path d="M89.8,230H376.8" stroke="#e4e4e4" stroke-width="0.7"/>
<text x="94.1" y="226.75" font-size="5.42" fill="#303030" stroke="#303030" stroke-width="0.05">Avg. Mail Processing Time</text>
<text x="193.3" y="226.75" font-size="5.42" fill="#303030" stroke="#303030" stroke-width="0.05">1.18 seconds</text>
<rect x="89.8" y="230" width="287" height="10.4" fill="#fafafa"/>
<path d="M89.8,240.4H376.8" stroke="#e4e4e4" stroke-width="0.7"/>
<text x="94.1" y="237.15" font-size="5.42" fill="#303030" stroke="#303030" stroke-width="0.05">Incoming Mail Traffic</text>
<text x="193.3" y="237.15" font-size="5.42" fill="#303030" stroke="#303030" stroke-width="0.05">10505.56 MiB</text>
<path d="M89.8,250.8H376.8" stroke="#e4e4e4" stroke-width="0.7"/>
<text x="94.1" y="247.55" font-size="5.42" fill="#303030" stroke="#303030" stroke-width="0.05">Outgoing Mail Traffic</text>
<text x="193.3" y="247.55" font-size="5.42" fill="#303030" stroke="#303030" stroke-width="0.05">1370.08 MiB</text>
<path d="M89.8,178H376.8" stroke="#e4e4e4" stroke-width="0.6"/>
<rect x="381.2" y="52.3" width="287.2" height="198.9" fill="#ffffff" stroke="#d9d9d9" stroke-width="0.7"/>
<rect x="381.2" y="52.3" width="287.2" height="14.1" fill="#f5f5f5"/>
<path d="M381.2,66.4H668.4" stroke="#e2e2e2" stroke-width="0.6"/>
<text x="385.4" y="61.15" font-size="6.25" fill="#2f8ad6" stroke="#2f8ad6" stroke-width="0.06">Incoming Mails</text>
<rect x="487.8" y="54.6" width="166.3" height="9.6" fill="#ffffff" stroke="#e2e2e2" stroke-width="0.6"/>
<circle cx="492.6" cy="60" r="2.3" fill="#94ae0a"/>
<text x="497.8" y="61.65" font-size="5.42" fill="#3c3c3c" stroke="#3c3c3c" stroke-width="0.05">Incoming Mails</text>
<path d="M538.1,54.6V64.2" stroke="#e2e2e2" stroke-width="0.6"/>
<circle cx="542.9" cy="60" r="2.3" fill="#115fa6"/>
<text x="548.1" y="61.65" font-size="5.42" fill="#3c3c3c" stroke="#3c3c3c" stroke-width="0.05">Junk Mails</text>
<path d="M578.3,54.6V64.2" stroke="#e2e2e2" stroke-width="0.6"/>
<circle cx="583.1" cy="60" r="2.3" fill="#a61120"/>
<text x="588.3" y="61.65" font-size="5.42" fill="#3c3c3c" stroke="#3c3c3c" stroke-width="0.05">Virus Mails</text>
<path d="M619.4,54.6V64.2" stroke="#e2e2e2" stroke-width="0.6"/>
<circle cx="624.2" cy="60" r="2.3" fill="#ff8809"/>
<text x="629.4" y="61.65" font-size="5.42" fill="#3c3c3c" stroke="#3c3c3c" stroke-width="0.05">Bounces</text>
<circle cx="661.1" cy="59.6" r="3.1" fill="none" stroke="#cfe0f0" stroke-width="0.5"/><path d="M659.5,59.6H662.7" stroke="#cfe0f0" stroke-width="0.5"/>
<path d="M401.3,71.3V157.3 M405.7,71.3V157.3 M410.11,71.3V157.3 M414.51,71.3V157.3 M418.91,71.3V157.3 M423.32,71.3V157.3 M427.72,71.3V157.3 M432.12,71.3V157.3 M436.53,71.3V157.3 M440.93,71.3V157.3 M445.33,71.3V157.3 M449.74,71.3V157.3 M454.14,71.3V157.3 M458.54,71.3V157.3 M462.95,71.3V157.3 M467.35,71.3V157.3 M471.75,71.3V157.3 M476.16,71.3V157.3 M480.56,71.3V157.3 M484.96,71.3V157.3 M489.37,71.3V157.3 M493.77,71.3V157.3 M498.17,71.3V157.3 M502.58,71.3V157.3 M506.98,71.3V157.3 M511.38,71.3V157.3 M515.79,71.3V157.3 M520.19,71.3V157.3 M524.59,71.3V157.3 M529,71.3V157.3 M533.4,71.3V157.3 M537.8,71.3V157.3 M542.21,71.3V157.3 M546.61,71.3V157.3 M551.01,71.3V157.3 M555.42,71.3V157.3 M559.82,71.3V157.3 M564.22,71.3V157.3 M568.63,71.3V157.3 M573.03,71.3V157.3 M577.43,71.3V157.3 M581.84,71.3V157.3 M586.24,71.3V157.3 M590.64,71.3V157.3 M595.05,71.3V157.3 M599.45,71.3V157.3 M603.85,71.3V157.3 M608.26,71.3V157.3 M612.66,71.3V157.3 M617.06,71.3V157.3 M621.47,71.3V157.3 M625.87,71.3V157.3 M630.27,71.3V157.3 M634.68,71.3V157.3 M639.08,71.3V157.3 M643.48,71.3V157.3 M647.89,71.3V157.3 M652.29,71.3V157.3 M656.69,71.3V157.3 M661.1,71.3V157.3 M400.7,145.01H664.9 M400.7,132.73H664.9 M400.7,120.44H664.9 M400.7,108.16H664.9 M400.7,95.87H664.9 M400.7,83.59H664.9 M400.7,71.3H664.9" stroke="#dedede" stroke-width="0.5" fill="none"/>
<path d="M400.7,157.3 L400.7,104.47 L409.51,86.29 L418.31,92.06 L427.12,94.4 L435.93,102.14 L444.73,127.74 L453.54,123.88 L462.35,97.59 L471.15,92.36 L479.96,96.61 L488.77,96.73 L497.57,96.98 L506.38,117.74 L515.19,122.53 L523.99,91.33 L532.8,83.83 L541.61,81.62 L550.41,88.13 L559.22,94.64 L568.03,120.2 L576.83,103 L585.64,85.55 L594.45,87.15 L603.25,80.15 L612.06,85.06 L620.87,91.2 L629.67,121.06 L638.48,123.15 L647.29,95.26 L656.09,81.87 L664.9,157.3 L664.9,157.3 Z" fill="#94ae0a" fill-opacity="0.6"/>
<path d="M400.7,104.47 L409.51,86.29 L418.31,92.06 L427.12,94.4 L435.93,102.14 L444.73,127.74 L453.54,123.88 L462.35,97.59 L471.15,92.36 L479.96,96.61 L488.77,96.73 L497.57,96.98 L506.38,117.74 L515.19,122.53 L523.99,91.33 L532.8,83.83 L541.61,81.62 L550.41,88.13 L559.22,94.64 L568.03,120.2 L576.83,103 L585.64,85.55 L594.45,87.15 L603.25,80.15 L612.06,85.06 L620.87,91.2 L629.67,121.06 L638.48,123.15 L647.29,95.26 L656.09,81.87 L664.9,157.3" fill="none" stroke="#4a5705" stroke-width="0.55" stroke-opacity="0.8" stroke-linejoin="round"/>
<path d="M400.7,157.3 L400.7,145.26 L409.51,137.89 L418.31,141.33 L427.12,138.87 L435.93,144.28 L444.73,144.28 L453.54,138.38 L462.35,139.61 L471.15,141.57 L479.96,140.84 L488.77,139.61 L497.57,138.13 L506.38,132.48 L515.19,132.97 L523.99,135.19 L532.8,132.24 L541.61,131.01 L550.41,131.99 L559.22,133.96 L568.03,133.96 L576.83,114.05 L585.64,128.8 L594.45,131.5 L603.25,125.36 L612.06,132.48 L620.87,132.73 L629.67,131.75 L638.48,135.43 L647.29,132.48 L656.09,128.8 L664.9,157.3 L664.9,157.3 Z" fill="#115fa6" fill-opacity="0.6"/>
<path d="M400.7,145.26 L409.51,137.89 L418.31,141.33 L427.12,138.87 L435.93,144.28 L444.73,144.28 L453.54,138.38 L462.35,139.61 L471.15,141.57 L479.96,140.84 L488.77,139.61 L497.57,138.13 L506.38,132.48 L515.19,132.97 L523.99,135.19 L532.8,132.24 L541.61,131.01 L550.41,131.99 L559.22,133.96 L568.03,133.96 L576.83,114.05 L585.64,128.8 L594.45,131.5 L603.25,125.36 L612.06,132.48 L620.87,132.73 L629.67,131.75 L638.48,135.43 L647.29,132.48 L656.09,128.8 L664.9,157.3" fill="none" stroke="#082f53" stroke-width="0.55" stroke-opacity="0.8" stroke-linejoin="round"/>
<path d="M400.7,157.3 L400.7,157.3 L409.51,157.3 L418.31,157.3 L427.12,157.3 L435.93,157.3 L444.73,157.3 L453.54,157.3 L462.35,157.3 L471.15,157.3 L479.96,157.3 L488.77,157.3 L497.57,157.3 L506.38,157.3 L515.19,157.3 L523.99,157.3 L532.8,157.3 L541.61,157.3 L550.41,157.3 L559.22,157.3 L568.03,157.3 L576.83,157.3 L585.64,157.3 L594.45,157.3 L603.25,157.3 L612.06,157.3 L620.87,157.3 L629.67,157.3 L638.48,157.3 L647.29,157.3 L656.09,157.3 L664.9,157.3 L664.9,157.3 Z" fill="#a61120" fill-opacity="0.6"/>
<path d="M400.7,157.3 L409.51,157.3 L418.31,157.3 L427.12,157.3 L435.93,157.3 L444.73,157.3 L453.54,157.3 L462.35,157.3 L471.15,157.3 L479.96,157.3 L488.77,157.3 L497.57,157.3 L506.38,157.3 L515.19,157.3 L523.99,157.3 L532.8,157.3 L541.61,157.3 L550.41,157.3 L559.22,157.3 L568.03,157.3 L576.83,157.3 L585.64,157.3 L594.45,157.3 L603.25,157.3 L612.06,157.3 L620.87,157.3 L629.67,157.3 L638.48,157.3 L647.29,157.3 L656.09,157.3 L664.9,157.3" fill="none" stroke="#530810" stroke-width="0.55" stroke-opacity="0.8" stroke-linejoin="round"/>
<path d="M400.7,157.3 L400.7,157.25 L409.51,157.25 L418.31,157.25 L427.12,157.25 L435.93,157.25 L444.73,157.25 L453.54,157.25 L462.35,157.25 L471.15,157.25 L479.96,157.25 L488.77,157.25 L497.57,157.25 L506.38,157.25 L515.19,157.25 L523.99,157.25 L532.8,157.25 L541.61,157.25 L550.41,157.25 L559.22,157.25 L568.03,157.25 L576.83,157.25 L585.64,157.25 L594.45,157.25 L603.25,157.25 L612.06,157.25 L620.87,157.25 L629.67,157.25 L638.48,157.25 L647.29,157.25 L656.09,157.25 L664.9,157.3 L664.9,157.3 Z" fill="#ff8809" fill-opacity="0.6"/>
<path d="M400.7,157.25 L409.51,157.25 L418.31,157.25 L427.12,157.25 L435.93,157.25 L444.73,157.25 L453.54,157.25 L462.35,157.25 L471.15,157.25 L479.96,157.25 L488.77,157.25 L497.57,157.25 L506.38,157.25 L515.19,157.25 L523.99,157.25 L532.8,157.25 L541.61,157.25 L550.41,157.25 L559.22,157.25 L568.03,157.25 L576.83,157.25 L585.64,157.25 L594.45,157.25 L603.25,157.25 L612.06,157.25 L620.87,157.25 L629.67,157.25 L638.48,157.25 L647.29,157.25 L656.09,157.25 L664.9,157.3" fill="none" stroke="#7f4404" stroke-width="0.55" stroke-opacity="0.8" stroke-linejoin="round"/>
<path d="M400.7,71.1V157.3H664.9 M398.9,157.3H400.7 M398.9,145.01H400.7 M398.9,132.73H400.7 M398.9,120.44H400.7 M398.9,108.16H400.7 M398.9,95.87H400.7 M398.9,83.59H400.7 M398.9,71.3H400.7 M401.3,157.3v1.6 M405.7,157.3v1.6 M410.11,157.3v1.6 M414.51,157.3v1.6 M418.91,157.3v1.6 M423.32,157.3v1.6 M427.72,157.3v1.6 M432.12,157.3v1.6 M436.53,157.3v1.6 M440.93,157.3v1.6 M445.33,157.3v1.6 M449.74,157.3v1.6 M454.14,157.3v1.6 M458.54,157.3v1.6 M462.95,157.3v1.6 M467.35,157.3v1.6 M471.75,157.3v1.6 M476.16,157.3v1.6 M480.56,157.3v1.6 M484.96,157.3v1.6 M489.37,157.3v1.6 M493.77,157.3v1.6 M498.17,157.3v1.6 M502.58,157.3v1.6 M506.98,157.3v1.6 M511.38,157.3v1.6 M515.79,157.3v1.6 M520.19,157.3v1.6 M524.59,157.3v1.6 M529,157.3v1.6 M533.4,157.3v1.6 M537.8,157.3v1.6 M542.21,157.3v1.6 M546.61,157.3v1.6 M551.01,157.3v1.6 M555.42,157.3v1.6 M559.82,157.3v1.6 M564.22,157.3v1.6 M568.63,157.3v1.6 M573.03,157.3v1.6 M577.43,157.3v1.6 M581.84,157.3v1.6 M586.24,157.3v1.6 M590.64,157.3v1.6 M595.05,157.3v1.6 M599.45,157.3v1.6 M603.85,157.3v1.6 M608.26,157.3v1.6 M612.66,157.3v1.6 M617.06,157.3v1.6 M621.47,157.3v1.6 M625.87,157.3v1.6 M630.27,157.3v1.6 M634.68,157.3v1.6 M639.08,157.3v1.6 M643.48,157.3v1.6 M647.89,157.3v1.6 M652.29,157.3v1.6 M656.69,157.3v1.6 M661.1,157.3v1.6 M664.9,157.3v1.6" stroke="#333" stroke-width="0.65" fill="none"/>
<text x="392.2" y="159.2" font-size="5.4" fill="#333" stroke="#333" stroke-width="0.03" text-anchor="middle">0</text>
<text x="392.2" y="146.91" font-size="5.4" fill="#333" stroke="#333" stroke-width="0.03" text-anchor="middle">5 k</text>
<text x="392.2" y="134.63" font-size="5.4" fill="#333" stroke="#333" stroke-width="0.03" text-anchor="middle">10 k</text>
<text x="392.2" y="122.34" font-size="5.4" fill="#333" stroke="#333" stroke-width="0.03" text-anchor="middle">15 k</text>
<text x="392.2" y="110.06" font-size="5.4" fill="#333" stroke="#333" stroke-width="0.03" text-anchor="middle">20 k</text>
<text x="392.2" y="97.77" font-size="5.4" fill="#333" stroke="#333" stroke-width="0.03" text-anchor="middle">25 k</text>
<text x="392.2" y="85.49" font-size="5.4" fill="#333" stroke="#333" stroke-width="0.03" text-anchor="middle">30 k</text>
<text x="392.2" y="73.2" font-size="5.4" fill="#333" stroke="#333" stroke-width="0.03" text-anchor="middle">35 k</text>
<text x="401.2" y="165.6" font-size="5.4" fill="#333" stroke="#333" stroke-width="0.03" text-anchor="middle">2025-09-01</text>
<text x="401.2" y="171.8" font-size="5.4" fill="#333" stroke="#333" stroke-width="0.03" text-anchor="middle">00:00:00</text>
<text x="432.17" y="165.6" font-size="5.4" fill="#333" stroke="#333" stroke-width="0.03" text-anchor="middle">2025-09-04</text>
<text x="432.17" y="171.8" font-size="5.4" fill="#333" stroke="#333" stroke-width="0.03" text-anchor="middle">14:00:00</text>
<text x="463.14" y="165.6" font-size="5.4" fill="#333" stroke="#333" stroke-width="0.03" text-anchor="middle">2025-09-08</text>
<text x="463.14" y="171.8" font-size="5.4" fill="#333" stroke="#333" stroke-width="0.03" text-anchor="middle">02:00:00</text>
<text x="494.11" y="165.6" font-size="5.4" fill="#333" stroke="#333" stroke-width="0.03" text-anchor="middle">2025-09-11</text>
<text x="494.11" y="171.8" font-size="5.4" fill="#333" stroke="#333" stroke-width="0.03" text-anchor="middle">14:00:00</text>
<text x="525.08" y="165.6" font-size="5.4" fill="#333" stroke="#333" stroke-width="0.03" text-anchor="middle">2025-09-15</text>
<text x="525.08" y="171.8" font-size="5.4" fill="#333" stroke="#333" stroke-width="0.03" text-anchor="middle">02:00:00</text>
<text x="556.05" y="165.6" font-size="5.4" fill="#333" stroke="#333" stroke-width="0.03" text-anchor="middle">2025-09-18</text>
<text x="556.05" y="171.8" font-size="5.4" fill="#333" stroke="#333" stroke-width="0.03" text-anchor="middle">14:00:00</text>
<text x="587.02" y="165.6" font-size="5.4" fill="#333" stroke="#333" stroke-width="0.03" text-anchor="middle">2025-09-22</text>
<text x="587.02" y="171.8" font-size="5.4" fill="#333" stroke="#333" stroke-width="0.03" text-anchor="middle">02:00:00</text>
<text x="617.99" y="165.6" font-size="5.4" fill="#333" stroke="#333" stroke-width="0.03" text-anchor="middle">2025-09-25</text>
<text x="617.99" y="171.8" font-size="5.4" fill="#333" stroke="#333" stroke-width="0.03" text-anchor="middle">14:00:00</text>
<text x="648.96" y="165.6" font-size="5.4" fill="#333" stroke="#333" stroke-width="0.03" text-anchor="middle">2025-09-29</text>
<text x="648.96" y="171.8" font-size="5.4" fill="#333" stroke="#333" stroke-width="0.03" text-anchor="middle">02:00:00</text>
<path d="M381.2,188.4H668.4" stroke="#e4e4e4" stroke-width="0.7"/>
<text x="385.5" y="185.15" font-size="5.42" fill="#303030" stroke="#303030" stroke-width="0.05">Incoming Mails</text>
<text x="484.8" y="185.15" font-size="5.42" fill="#303030" stroke="#303030" stroke-width="0.05">715854</text>
<rect x="547.4" y="179.3" width="116.7" height="7.6" fill="#f3f3f3"/>
<rect x="547.4" y="179.3" width="116.7" height="7.6" fill="#c2ddf2"/>
<text x="605.75" y="185.1" font-size="5.42" fill="#6a6a6a" stroke="#6a6a6a" stroke-width="0.05" text-anchor="middle">100%</text>
<rect x="381.2" y="188.4" width="287.2" height="10.4" fill="#fafafa"/>
<path d="M381.2,198.8H668.4" stroke="#e4e4e4" stroke-width="0.7"/>
<text x="385.5" y="195.55" font-size="5.42" fill="#303030" stroke="#303030" stroke-width="0.05">Junk Mails</text>
<text x="484.8" y="195.55" font-size="5.42" fill="#303030" stroke="#303030" stroke-width="0.05">266959</text>
<rect x="547.4" y="189.7" width="116.7" height="7.6" fill="#f3f3f3"/>
<rect x="547.4" y="189.7" width="43.18" height="7.6" fill="#c2ddf2"/>
<text x="605.75" y="195.5" font-size="5.42" fill="#6a6a6a" stroke="#6a6a6a" stroke-width="0.05" text-anchor="middle">37%</text>
<path d="M381.2,209.2H668.4" stroke="#e4e4e4" stroke-width="0.7"/>
<text x="385.5" y="205.95" font-size="5.42" fill="#303030" stroke="#303030" stroke-width="0.05">Greylisted Mails</text>
<text x="484.8" y="205.95" font-size="5.42" fill="#303030" stroke="#303030" stroke-width="0.05">573</text>
<rect x="547.4" y="200.1" width="116.7" height="7.6" fill="#f3f3f3"/>
<text x="605.75" y="205.9" font-size="5.42" fill="#6a6a6a" stroke="#6a6a6a" stroke-width="0.05" text-anchor="middle">0%</text>
<rect x="381.2" y="209.2" width="287.2" height="10.4" fill="#fafafa"/>
<path d="M381.2,219.6H668.4" stroke="#e4e4e4" stroke-width="0.7"/>
<text x="385.5" y="216.35" font-size="5.42" fill="#303030" stroke="#303030" stroke-width="0.05">Spam Mails</text>
<text x="484.8" y="216.35" font-size="5.42" fill="#303030" stroke="#303030" stroke-width="0.05">82146</text>
<rect x="547.4" y="210.5" width="116.7" height="7.6" fill="#f3f3f3"/>
<rect x="547.4" y="210.5" width="12.84" height="7.6" fill="#c2ddf2"/>
<text x="605.75" y="216.3" font-size="5.42" fill="#6a6a6a" stroke="#6a6a6a" stroke-width="0.05" text-anchor="middle">11%</text>
<path d="M381.2,230H668.4" stroke="#e4e4e4" stroke-width="0.7"/>
<text x="385.5" y="226.75" font-size="5.42" fill="#303030" stroke="#303030" stroke-width="0.05">SPF rejects</text>
<text x="484.8" y="226.75" font-size="5.42" fill="#303030" stroke="#303030" stroke-width="0.05">265</text>
<rect x="547.4" y="220.9" width="116.7" height="7.6" fill="#f3f3f3"/>
<text x="605.75" y="226.7" font-size="5.42" fill="#6a6a6a" stroke="#6a6a6a" stroke-width="0.05" text-anchor="middle">0%</text>
<rect x="381.2" y="230" width="287.2" height="10.4" fill="#fafafa"/>
<path d="M381.2,240.4H668.4" stroke="#e4e4e4" stroke-width="0.7"/>
<text x="385.5" y="237.15" font-size="5.42" fill="#303030" stroke="#303030" stroke-width="0.05">Bounces</text>
<text x="484.8" y="237.15" font-size="5.42" fill="#303030" stroke="#303030" stroke-width="0.05">1283</text>
<rect x="547.4" y="231.3" width="116.7" height="7.6" fill="#f3f3f3"/>
<text x="605.75" y="237.1" font-size="5.42" fill="#6a6a6a" stroke="#6a6a6a" stroke-width="0.05" text-anchor="middle">0%</text>
<path d="M381.2,250.8H668.4" stroke="#e4e4e4" stroke-width="0.7"/>
<text x="385.5" y="247.55" font-size="5.42" fill="#303030" stroke="#303030" stroke-width="0.05">Virus Mails</text>
<text x="484.8" y="247.55" font-size="5.42" fill="#303030" stroke="#303030" stroke-width="0.05">51</text>
<rect x="547.4" y="241.7" width="116.7" height="7.6" fill="#f3f3f3"/>
<text x="605.75" y="247.5" font-size="5.42" fill="#6a6a6a" stroke="#6a6a6a" stroke-width="0.05" text-anchor="middle">0%</text>
<path d="M381.2,178H668.4" stroke="#e4e4e4" stroke-width="0.6"/>
<rect x="89.8" y="255.9" width="287" height="156.7" fill="#ffffff" stroke="#d9d9d9" stroke-width="0.7"/>
<rect x="89.8" y="255.9" width="287" height="14.2" fill="#f5f5f5"/>
<path d="M89.8,270.1H376.8" stroke="#e2e2e2" stroke-width="0.6"/>
<text x="94" y="264.75" font-size="6.25" fill="#2f8ad6" stroke="#2f8ad6" stroke-width="0.06">Outgoing Mails</text>
<rect x="236.8" y="258.8" width="126.5" height="9.6" fill="#ffffff" stroke="#e2e2e2" stroke-width="0.6"/>
<circle cx="241.6" cy="264.2" r="2.3" fill="#94ae0a"/>
<text x="246.8" y="265.85" font-size="5.42" fill="#3c3c3c" stroke="#3c3c3c" stroke-width="0.05">Outgoing Mails</text>
<path d="M287.6,258.8V268.4" stroke="#e2e2e2" stroke-width="0.6"/>
<circle cx="292.4" cy="264.2" r="2.3" fill="#115fa6"/>
<text x="297.6" y="265.85" font-size="5.42" fill="#3c3c3c" stroke="#3c3c3c" stroke-width="0.05">Virus Mails</text>
<path d="M328.4,258.8V268.4" stroke="#e2e2e2" stroke-width="0.6"/>
<circle cx="333.2" cy="264.2" r="2.3" fill="#a61120"/>
<text x="338.4" y="265.85" font-size="5.42" fill="#3c3c3c" stroke="#3c3c3c" stroke-width="0.05">Bounces</text>
<circle cx="369.5" cy="263.8" r="3.1" fill="none" stroke="#cfe0f0" stroke-width="0.5"/><path d="M367.9,263.8H371.1" stroke="#cfe0f0" stroke-width="0.5"/>
<path d="M109.2,274.8V360.3 M113.61,274.8V360.3 M118.02,274.8V360.3 M122.43,274.8V360.3 M126.85,274.8V360.3 M131.26,274.8V360.3 M135.67,274.8V360.3 M140.08,274.8V360.3 M144.49,274.8V360.3 M148.91,274.8V360.3 M153.32,274.8V360.3 M157.73,274.8V360.3 M162.14,274.8V360.3 M166.55,274.8V360.3 M170.96,274.8V360.3 M175.38,274.8V360.3 M179.79,274.8V360.3 M184.2,274.8V360.3 M188.61,274.8V360.3 M193.02,274.8V360.3 M197.43,274.8V360.3 M201.84,274.8V360.3 M206.26,274.8V360.3 M210.67,274.8V360.3 M215.08,274.8V360.3 M219.49,274.8V360.3 M223.9,274.8V360.3 M228.31,274.8V360.3 M232.73,274.8V360.3 M237.14,274.8V360.3 M241.55,274.8V360.3 M245.96,274.8V360.3 M250.37,274.8V360.3 M254.79,274.8V360.3 M259.2,274.8V360.3 M263.61,274.8V360.3 M268.02,274.8V360.3 M272.43,274.8V360.3 M276.84,274.8V360.3 M281.25,274.8V360.3 M285.67,274.8V360.3 M290.08,274.8V360.3 M294.49,274.8V360.3 M298.9,274.8V360.3 M303.31,274.8V360.3 M307.73,274.8V360.3 M312.14,274.8V360.3 M316.55,274.8V360.3 M320.96,274.8V360.3 M325.37,274.8V360.3 M329.78,274.8V360.3 M334.2,274.8V360.3 M338.61,274.8V360.3 M343.02,274.8V360.3 M347.43,274.8V360.3 M351.84,274.8V360.3 M356.25,274.8V360.3 M360.67,274.8V360.3 M365.08,274.8V360.3 M369.49,274.8V360.3 M108.6,351.75H373.3 M108.6,343.2H373.3 M108.6,334.65H373.3 M108.6,326.1H373.3 M108.6,317.55H373.3 M108.6,309H373.3 M108.6,300.45H373.3 M108.6,291.9H373.3 M108.6,283.35H373.3 M108.6,274.8H373.3" stroke="#dedede" stroke-width="0.5" fill="none"/>
<path d="M108.6,360.3 L108.6,278.65 L117.42,314.13 L126.25,307.55 L135.07,303.87 L143.89,282.75 L152.72,349.01 L161.54,328.49 L170.36,323.36 L179.19,322.34 L188.01,316.18 L196.83,318.83 L205.66,320.29 L214.48,351.49 L223.3,355.77 L232.13,283.35 L240.95,312.59 L249.77,320.29 L258.6,319.26 L267.42,328.49 L276.24,353.12 L285.07,354.57 L293.89,299.77 L302.71,321.31 L311.54,312.51 L320.36,321.31 L329.18,324.82 L338.01,353.12 L346.83,354.14 L355.65,312.08 L364.48,320.29 L373.3,360.3 L373.3,360.3 Z" fill="#94ae0a" fill-opacity="0.6"/>
<path d="M108.6,278.65 L117.42,314.13 L126.25,307.55 L135.07,303.87 L143.89,282.75 L152.72,349.01 L161.54,328.49 L170.36,323.36 L179.19,322.34 L188.01,316.18 L196.83,318.83 L205.66,320.29 L214.48,351.49 L223.3,355.77 L232.13,283.35 L240.95,312.59 L249.77,320.29 L258.6,319.26 L267.42,328.49 L276.24,353.12 L285.07,354.57 L293.89,299.77 L302.71,321.31 L311.54,312.51 L320.36,321.31 L329.18,324.82 L338.01,353.12 L346.83,354.14 L355.65,312.08 L364.48,320.29 L373.3,360.3" fill="none" stroke="#4a5705" stroke-width="0.55" stroke-opacity="0.8" stroke-linejoin="round"/>
<path d="M108.6,360.3 L108.6,360.3 L117.42,360.3 L126.25,360.3 L135.07,360.3 L143.89,360.3 L152.72,360.3 L161.54,360.3 L170.36,360.3 L179.19,360.3 L188.01,360.3 L196.83,360.3 L205.66,360.3 L214.48,360.3 L223.3,360.3 L232.13,360.3 L240.95,360.3 L249.77,360.3 L258.6,360.3 L267.42,360.3 L276.24,360.3 L285.07,360.3 L293.89,360.3 L302.71,360.3 L311.54,360.3 L320.36,360.3 L329.18,360.3 L338.01,360.3 L346.83,360.3 L355.65,360.3 L364.48,360.3 L373.3,360.3 L373.3,360.3 Z" fill="#115fa6" fill-opacity="0.6"/>
<path d="M108.6,360.3 L117.42,360.3 L126.25,360.3 L135.07,360.3 L143.89,360.3 L152.72,360.3 L161.54,360.3 L170.36,360.3 L179.19,360.3 L188.01,360.3 L196.83,360.3 L205.66,360.3 L214.48,360.3 L223.3,360.3 L232.13,360.3 L240.95,360.3 L249.77,360.3 L258.6,360.3 L267.42,360.3 L276.24,360.3 L285.07,360.3 L293.89,360.3 L302.71,360.3 L311.54,360.3 L320.36,360.3 L329.18,360.3 L338.01,360.3 L346.83,360.3 L355.65,360.3 L364.48,360.3 L373.3,360.3" fill="none" stroke="#082f53" stroke-width="0.55" stroke-opacity="0.8" stroke-linejoin="round"/>
<path d="M108.6,360.3 L108.6,360.3 L117.42,360.3 L126.25,360.3 L135.07,360.3 L143.89,360.3 L152.72,360.3 L161.54,360.3 L170.36,360.3 L179.19,360.3 L188.01,360.3 L196.83,360.3 L205.66,360.3 L214.48,360.3 L223.3,360.3 L232.13,360.3 L240.95,360.3 L249.77,360.3 L258.6,357.91 L267.42,358.59 L276.24,360.3 L285.07,360.3 L293.89,357.74 L302.71,359.27 L311.54,360.3 L320.36,360.3 L329.18,360.3 L338.01,360.3 L346.83,360.3 L355.65,360.3 L364.48,360.3 L373.3,360.3 L373.3,360.3 Z" fill="#a61120" fill-opacity="0.6"/>
<path d="M108.6,360.3 L117.42,360.3 L126.25,360.3 L135.07,360.3 L143.89,360.3 L152.72,360.3 L161.54,360.3 L170.36,360.3 L179.19,360.3 L188.01,360.3 L196.83,360.3 L205.66,360.3 L214.48,360.3 L223.3,360.3 L232.13,360.3 L240.95,360.3 L249.77,360.3 L258.6,357.91 L267.42,358.59 L276.24,360.3 L285.07,360.3 L293.89,357.74 L302.71,359.27 L311.54,360.3 L320.36,360.3 L329.18,360.3 L338.01,360.3 L346.83,360.3 L355.65,360.3 L364.48,360.3 L373.3,360.3" fill="none" stroke="#530810" stroke-width="0.55" stroke-opacity="0.8" stroke-linejoin="round"/>
<path d="M108.6,274.6V360.3H373.3 M106.8,360.3H108.6 M106.8,351.75H108.6 M106.8,343.2H108.6 M106.8,334.65H108.6 M106.8,326.1H108.6 M106.8,317.55H108.6 M106.8,309H108.6 M106.8,300.45H108.6 M106.8,291.9H108.6 M106.8,283.35H108.6 M106.8,274.8H108.6 M109.2,360.3v1.6 M113.61,360.3v1.6 M118.02,360.3v1.6 M122.43,360.3v1.6 M126.85,360.3v1.6 M131.26,360.3v1.6 M135.67,360.3v1.6 M140.08,360.3v1.6 M144.49,360.3v1.6 M148.91,360.3v1.6 M153.32,360.3v1.6 M157.73,360.3v1.6 M162.14,360.3v1.6 M166.55,360.3v1.6 M170.96,360.3v1.6 M175.38,360.3v1.6 M179.79,360.3v1.6 M184.2,360.3v1.6 M188.61,360.3v1.6 M193.02,360.3v1.6 M197.43,360.3v1.6 M201.84,360.3v1.6 M206.26,360.3v1.6 M210.67,360.3v1.6 M215.08,360.3v1.6 M219.49,360.3v1.6 M223.9,360.3v1.6 M228.31,360.3v1.6 M232.73,360.3v1.6 M237.14,360.3v1.6 M241.55,360.3v1.6 M245.96,360.3v1.6 M250.37,360.3v1.6 M254.79,360.3v1.6 M259.2,360.3v1.6 M263.61,360.3v1.6 M268.02,360.3v1.6 M272.43,360.3v1.6 M276.84,360.3v1.6 M281.25,360.3v1.6 M285.67,360.3v1.6 M290.08,360.3v1.6 M294.49,360.3v1.6 M298.9,360.3v1.6 M303.31,360.3v1.6 M307.73,360.3v1.6 M312.14,360.3v1.6 M316.55,360.3v1.6 M320.96,360.3v1.6 M325.37,360.3v1.6 M329.78,360.3v1.6 M334.2,360.3v1.6 M338.61,360.3v1.6 M343.02,360.3v1.6 M347.43,360.3v1.6 M351.84,360.3v1.6 M356.25,360.3v1.6 M360.67,360.3v1.6 M365.08,360.3v1.6 M369.49,360.3v1.6 M373.3,360.3v1.6" stroke="#333" stroke-width="0.65" fill="none"/>
<text x="100.1" y="362.2" font-size="5.4" fill="#333" stroke="#333" stroke-width="0.03" text-anchor="middle">0</text>
<text x="100.1" y="353.65" font-size="5.4" fill="#333" stroke="#333" stroke-width="0.03" text-anchor="middle">100</text>
<text x="100.1" y="345.1" font-size="5.4" fill="#333" stroke="#333" stroke-width="0.03" text-anchor="middle">200</text>
<text x="100.1" y="336.55" font-size="5.4" fill="#333" stroke="#333" stroke-width="0.03" text-anchor="middle">300</text>
<text x="100.1" y="328" font-size="5.4" fill="#333" stroke="#333" stroke-width="0.03" text-anchor="middle">400</text>
<text x="100.1" y="319.45" font-size="5.4" fill="#333" stroke="#333" stroke-width="0.03" text-anchor="middle">500</text>
<text x="100.1" y="310.9" font-size="5.4" fill="#333" stroke="#333" stroke-width="0.03" text-anchor="middle">600</text>
<text x="100.1" y="302.35" font-size="5.4" fill="#333" stroke="#333" stroke-width="0.03" text-anchor="middle">700</text>
<text x="100.1" y="293.8" font-size="5.4" fill="#333" stroke="#333" stroke-width="0.03" text-anchor="middle">800</text>
<text x="100.1" y="285.25" font-size="5.4" fill="#333" stroke="#333" stroke-width="0.03" text-anchor="middle">900</text>
<text x="100.1" y="276.7" font-size="5.4" fill="#333" stroke="#333" stroke-width="0.03" text-anchor="middle">1 k</text>
<text x="109.1" y="368.6" font-size="5.4" fill="#333" stroke="#333" stroke-width="0.03" text-anchor="middle">2025-09-01</text>
<text x="109.1" y="374.8" font-size="5.4" fill="#333" stroke="#333" stroke-width="0.03" text-anchor="middle">00:00:00</text>
<text x="140.07" y="368.6" font-size="5.4" fill="#333" stroke="#333" stroke-width="0.03" text-anchor="middle">2025-09-04</text>
<text x="140.07" y="374.8" font-size="5.4" fill="#333" stroke="#333" stroke-width="0.03" text-anchor="middle">14:00:00</text>
<text x="171.04" y="368.6" font-size="5.4" fill="#333" stroke="#333" stroke-width="0.03" text-anchor="middle">2025-09-08</text>
<text x="171.04" y="374.8" font-size="5.4" fill="#333" stroke="#333" stroke-width="0.03" text-anchor="middle">02:00:00</text>
<text x="202.01" y="368.6" font-size="5.4" fill="#333" stroke="#333" stroke-width="0.03" text-anchor="middle">2025-09-11</text>
<text x="202.01" y="374.8" font-size="5.4" fill="#333" stroke="#333" stroke-width="0.03" text-anchor="middle">14:00:00</text>
<text x="232.98" y="368.6" font-size="5.4" fill="#333" stroke="#333" stroke-width="0.03" text-anchor="middle">2025-09-15</text>
<text x="232.98" y="374.8" font-size="5.4" fill="#333" stroke="#333" stroke-width="0.03" text-anchor="middle">02:00:00</text>
<text x="263.95" y="368.6" font-size="5.4" fill="#333" stroke="#333" stroke-width="0.03" text-anchor="middle">2025-09-18</text>
<text x="263.95" y="374.8" font-size="5.4" fill="#333" stroke="#333" stroke-width="0.03" text-anchor="middle">14:00:00</text>
<text x="294.92" y="368.6" font-size="5.4" fill="#333" stroke="#333" stroke-width="0.03" text-anchor="middle">2025-09-22</text>
<text x="294.92" y="374.8" font-size="5.4" fill="#333" stroke="#333" stroke-width="0.03" text-anchor="middle">02:00:00</text>
<text x="325.89" y="368.6" font-size="5.4" fill="#333" stroke="#333" stroke-width="0.03" text-anchor="middle">2025-09-25</text>
<text x="325.89" y="374.8" font-size="5.4" fill="#333" stroke="#333" stroke-width="0.03" text-anchor="middle">14:00:00</text>
<text x="356.86" y="368.6" font-size="5.4" fill="#333" stroke="#333" stroke-width="0.03" text-anchor="middle">2025-09-29</text>
<text x="356.86" y="374.8" font-size="5.4" fill="#333" stroke="#333" stroke-width="0.03" text-anchor="middle">02:00:00</text>
<path d="M89.8,391.8H376.8" stroke="#e4e4e4" stroke-width="0.7"/>
<text x="94.1" y="388.55" font-size="5.42" fill="#303030" stroke="#303030" stroke-width="0.05">Outgoing Mails</text>
<text x="193.3" y="388.55" font-size="5.42" fill="#303030" stroke="#303030" stroke-width="0.05">13359</text>
<rect x="256" y="382.7" width="116.6" height="7.6" fill="#f3f3f3"/>
<rect x="256" y="382.7" width="116.6" height="7.6" fill="#c2ddf2"/>
<text x="314.3" y="388.5" font-size="5.42" fill="#6a6a6a" stroke="#6a6a6a" stroke-width="0.05" text-anchor="middle">100%</text>
<rect x="89.8" y="391.8" width="287" height="10.4" fill="#fafafa"/>
<path d="M89.8,402.2H376.8" stroke="#e4e4e4" stroke-width="0.7"/>
<text x="94.1" y="398.95" font-size="5.42" fill="#303030" stroke="#303030" stroke-width="0.05">Bounces</text>
<text x="193.3" y="398.95" font-size="5.42" fill="#303030" stroke="#303030" stroke-width="0.05">142</text>
<rect x="256" y="393.1" width="116.6" height="7.6" fill="#f3f3f3"/>
<rect x="256" y="393.1" width="1.17" height="7.6" fill="#c2ddf2"/>
<text x="314.3" y="398.9" font-size="5.42" fill="#6a6a6a" stroke="#6a6a6a" stroke-width="0.05" text-anchor="middle">1%</text>
<path d="M89.8,412.6H376.8" stroke="#e4e4e4" stroke-width="0.7"/>
<text x="94.1" y="409.35" font-size="5.42" fill="#303030" stroke="#303030" stroke-width="0.05">Virus Mails</text>
<text x="193.3" y="409.35" font-size="5.42" fill="#303030" stroke="#303030" stroke-width="0.05">0</text>
<rect x="256" y="403.5" width="116.6" height="7.6" fill="#f3f3f3"/>
<text x="314.3" y="409.3" font-size="5.42" fill="#6a6a6a" stroke="#6a6a6a" stroke-width="0.05" text-anchor="middle">0%</text>
<path d="M89.8,381.4H376.8" stroke="#e4e4e4" stroke-width="0.6"/>
</svg></div></body></html>
